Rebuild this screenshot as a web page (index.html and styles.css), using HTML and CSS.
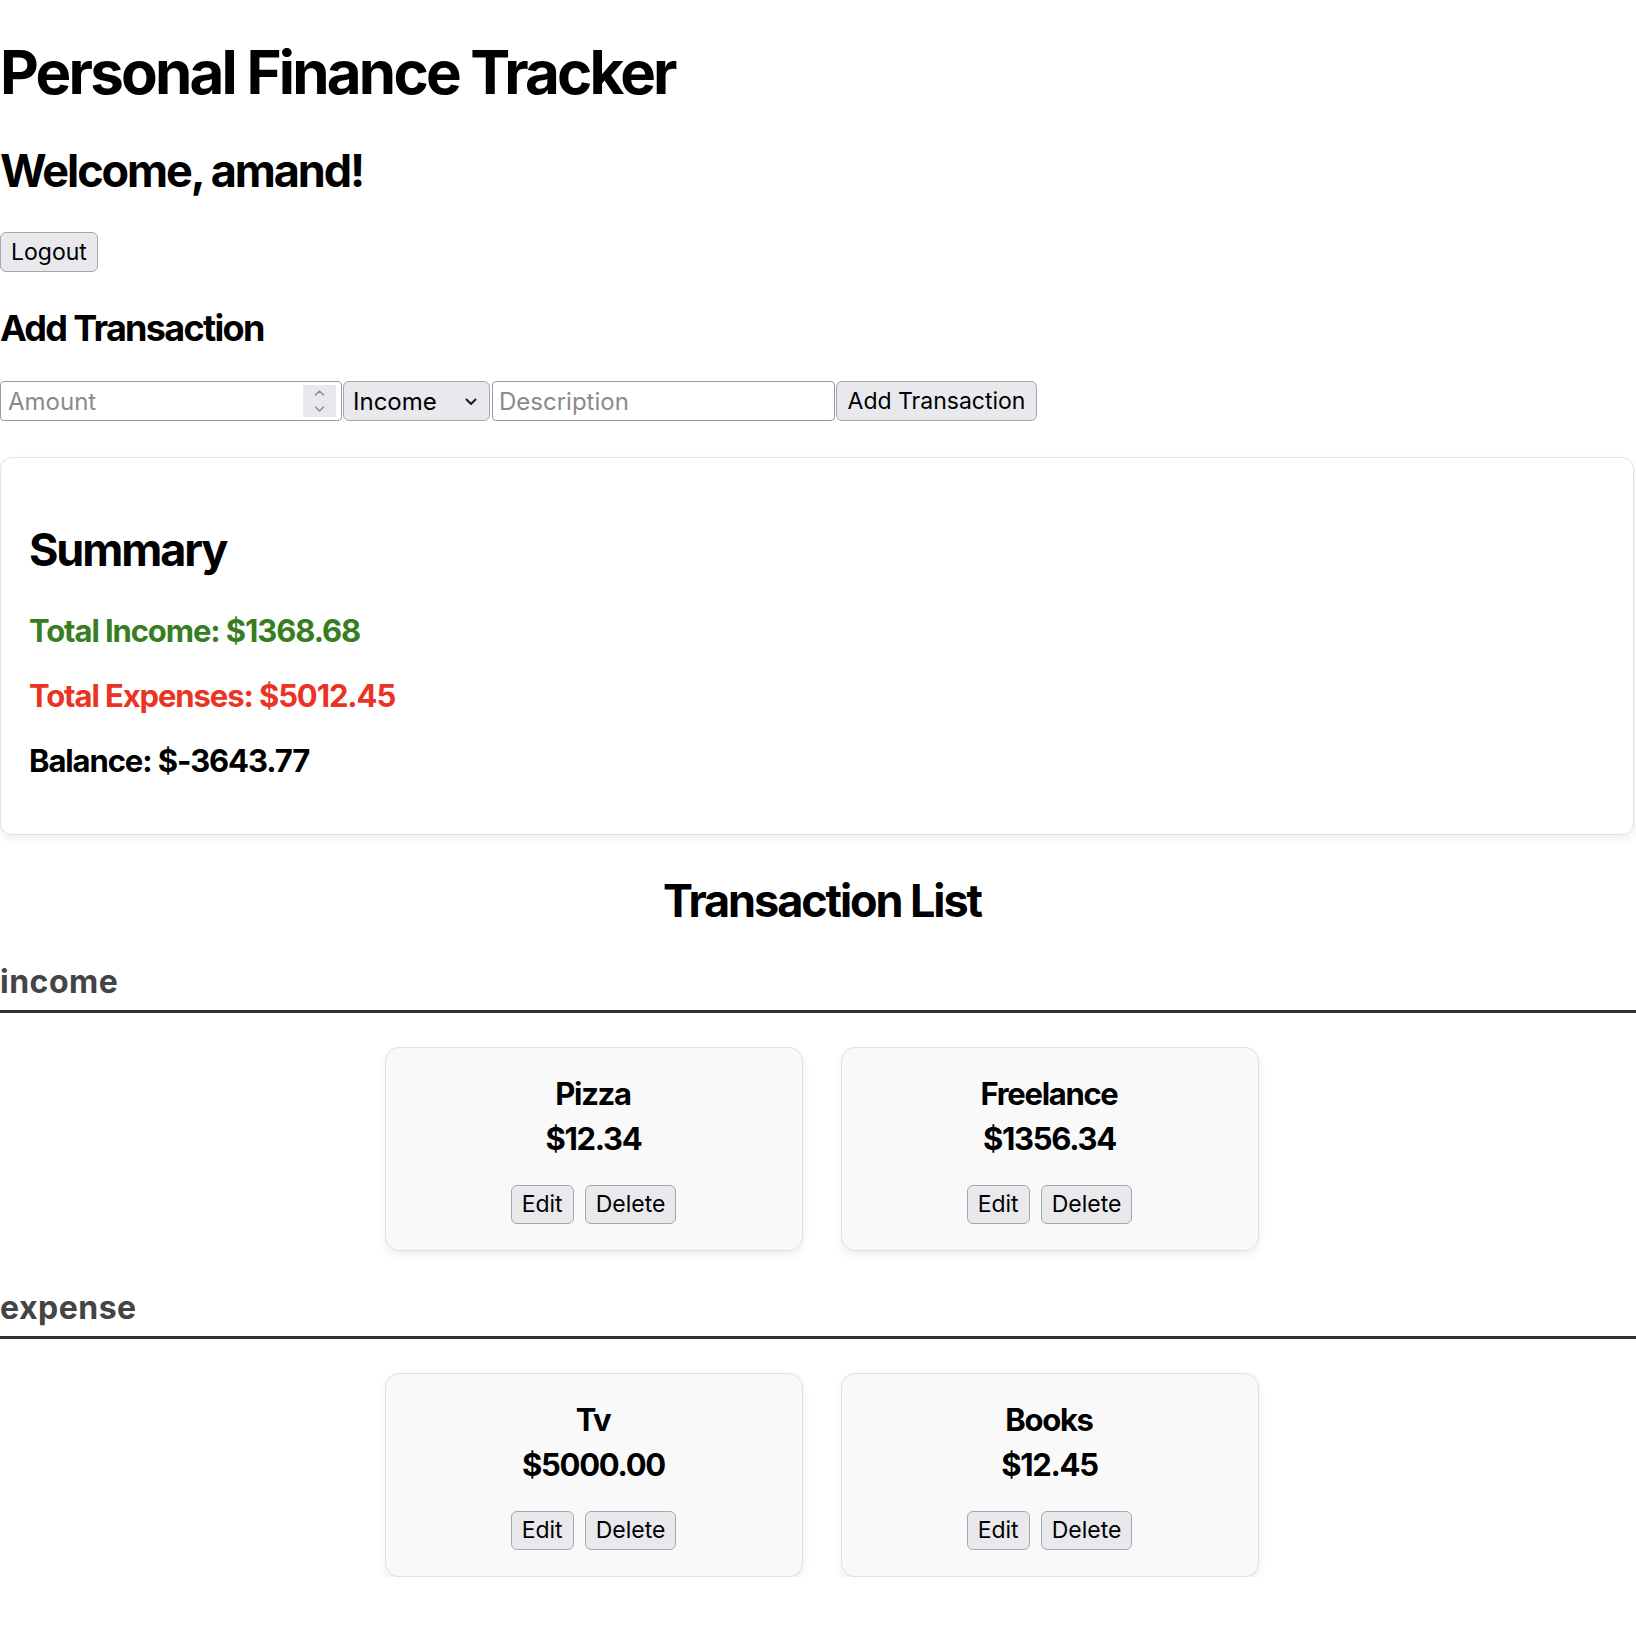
FILE: index.html
```html
<!DOCTYPE html>
<html lang="en">
<head>
<meta charset="utf-8">
<title>Personal Finance Tracker</title>
<link rel="stylesheet" href="styles.css">
</head>
<body>
<div class="app">
  <h1 class="title">Personal Finance Tracker</h1>
  <h2 class="welcome">Welcome, amand!</h2>
  <button class="btn logout">Logout</button>

  <h3 class="add-title">Add Transaction</h3>
  <form class="add-form">
    <div class="amount-field">
      <input class="amount-input" type="text" placeholder="Amount">
      <span class="spinner">
        <svg width="11" height="26" viewBox="0 0 11 26"><polyline points="1.5,7 5.5,3 9.5,7" fill="none" stroke="#8e8e93" stroke-width="1.6" stroke-linecap="round" stroke-linejoin="round"/><polyline points="1.5,19 5.5,23 9.5,19" fill="none" stroke="#8e8e93" stroke-width="1.6" stroke-linecap="round" stroke-linejoin="round"/></svg>
      </span>
    </div>
    <div class="select-field">
      <span class="select-value">Income</span>
      <svg class="chev" width="12" height="8" viewBox="0 0 12 8"><polyline points="1.5,1.5 6,6 10.5,1.5" fill="none" stroke="#1c1c1e" stroke-width="2" stroke-linecap="round" stroke-linejoin="round"/></svg>
    </div>
    <input class="desc-input" type="text" placeholder="Description">
    <button class="btn add-btn" type="button">Add Transaction</button>
  </form>

  <section class="summary">
    <h2 class="summary-title">Summary</h2>
    <p class="sum-line income-total">Total Income: $1368.68</p>
    <p class="sum-line expense-total">Total Expenses: $5012.45</p>
    <p class="sum-line balance">Balance: $-3643.77</p>
  </section>

  <section class="tx">
    <h2 class="tx-title">Transaction List</h2>

    <h3 class="group-title">income</h3>
    <div class="cards">
      <div class="card">
        <h4 class="card-name">Pizza</h4>
        <p class="card-amount">$12.34</p>
        <div class="card-actions"><button class="btn sm">Edit</button><button class="btn sm">Delete</button></div>
      </div>
      <div class="card">
        <h4 class="card-name">Freelance</h4>
        <p class="card-amount">$1356.34</p>
        <div class="card-actions"><button class="btn sm">Edit</button><button class="btn sm">Delete</button></div>
      </div>
    </div>

    <h3 class="group-title">expense</h3>
    <div class="cards">
      <div class="card">
        <h4 class="card-name">Tv</h4>
        <p class="card-amount">$5000.00</p>
        <div class="card-actions"><button class="btn sm">Edit</button><button class="btn sm">Delete</button></div>
      </div>
      <div class="card">
        <h4 class="card-name">Books</h4>
        <p class="card-amount">$12.45</p>
        <div class="card-actions"><button class="btn sm">Edit</button><button class="btn sm">Delete</button></div>
      </div>
    </div>
  </section>
</div>
</body>
</html>
```
FILE: styles.css
```css
html, body {
  margin: 0;
  padding: 0;
  background: #ffffff;
}
body {
  font-family: Inter, "Noto Sans", "Liberation Sans", sans-serif;
  color: #000;
}
.app {
  display: flex;
  flex-direction: column;
  align-items: flex-start;
}
h1, h2, h3, h4, p { margin: 0; }

.title {
  font-size: 60px;
  font-weight: 700;
  margin-top: 36px;
  letter-spacing: -2.8px;
}
.welcome {
  font-size: 45px;
  font-weight: 700;
  margin-top: 35px;
  letter-spacing: -2.1px;
}
.btn {
  font-family: Inter, "Noto Sans", "Liberation Sans", sans-serif;
  font-size: 23px;
  color: #000;
  background: #e9e9ed;
  border: 1px solid #a6a6b0;
  border-radius: 6px;
  padding: 0 10px;
  height: 40px;
  line-height: 38px;
  cursor: pointer;
}
.logout {
  margin-top: 34px;
}
.add-title {
  font-size: 36px;
  font-weight: 700;
  margin-top: 34px;
  letter-spacing: -1.7px;
}
.add-form {
  display: flex;
  align-items: stretch;
  margin-top: 31px;
  height: 40px;
}
.amount-field {
  width: 342px;
  box-sizing: border-box;
  border: 1px solid #9a9a9f;
  border-radius: 4px;
  display: flex;
  align-items: center;
  padding: 3px 5px 3px 0;
}
.amount-input, .desc-input {
  font-family: Inter, "Noto Sans", "Liberation Sans", sans-serif;
  font-size: 24px;
  border: none;
  outline: none;
  background: transparent;
  padding: 0 0 0 7px;
  min-width: 0;
}
.amount-input {
  flex: 1;
  height: 32px;
}
.amount-input::placeholder, .desc-input::placeholder {
  color: #8a8a8e;
}
.spinner {
  width: 33px;
  height: 32px;
  background: #e9e9ed;
  display: flex;
  align-items: center;
  justify-content: center;
}
.select-field {
  width: 147px;
  box-sizing: border-box;
  margin-left: 1px;
  background: #e9e9ed;
  border: 1px solid #a6a6b0;
  border-radius: 6px;
  display: flex;
  align-items: center;
  justify-content: space-between;
  padding: 0 12px 0 9px;
  font-size: 24px;
}
.chev { margin-top: 2px; }
.desc-input {
  width: 343px;
  box-sizing: border-box;
  margin-left: 2px;
  border: 1px solid #9a9a9f;
  border-radius: 4px;
  height: 40px;
  padding-left: 6px;
}
.add-btn {
  margin-left: 1px;
  width: 201px;
  padding: 0 10px;
}

.summary {
  align-self: stretch;
  margin: 36px 2px 0 0;
  background: #fff;
  border: 1px solid #e2e2e2;
  border-radius: 12px;
  box-shadow: 0 4px 8px rgba(0, 0, 0, 0.07);
  padding: 0 28px;
  display: flex;
  flex-direction: column;
  align-items: flex-start;
}
.summary-title {
  font-size: 45px;
  font-weight: 700;
  margin-top: 64px;
  letter-spacing: -2.1px;
}
.sum-line {
  font-size: 31px;
  font-weight: 700;
  margin-top: 28px;
  letter-spacing: -1.1px;
}
.income-total { color: #377e22; margin-top: 35px; }
.expense-total { color: #ea3323; }
.balance { margin-bottom: 55px; }

.tx {
  align-self: stretch;
  display: flex;
  flex-direction: column;
}
.tx-title {
  font-size: 45px;
  font-weight: 700;
  text-align: center;
  margin-top: 38px;
  padding-left: 8px;
  letter-spacing: -2.1px;
}
.group-title {
  font-size: 32px;
  font-weight: 700;
  color: #444444;
  margin-top: 34px;
  padding-bottom: 9px;
  border-bottom: 3px solid #333333;
  letter-spacing: 0.5px;
}
.cards + .group-title { margin-top: 37px; }
.cards {
  display: flex;
  justify-content: center;
  gap: 38px;
  margin-top: 34px;
  padding-left: 7px;
}
.card {
  width: 418px;
  height: 204px;
  box-sizing: border-box;
  background: #f9f9f9;
  border: 1px solid #e0e0e0;
  border-radius: 14px;
  box-shadow: 0 4px 8px rgba(0, 0, 0, 0.07);
  display: flex;
  flex-direction: column;
  align-items: center;
}
.card-name {
  font-size: 31px;
  font-weight: 700;
  margin-top: 27px;
  letter-spacing: -1.3px;
  text-indent: -1px;
}
.card-amount {
  font-size: 31px;
  font-weight: 700;
  margin-top: 8px;
  letter-spacing: -1.3px;
}
.card-actions {
  display: flex;
  gap: 11px;
  margin-top: 28px;
}
.btn.sm {
  height: 39px;
  line-height: 37px;
}
```
